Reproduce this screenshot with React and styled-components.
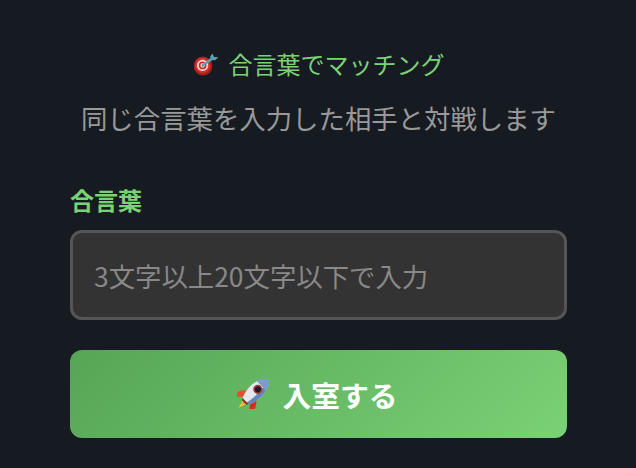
import React from "react";
import styled, { createGlobalStyle } from "styled-components";

const GlobalStyle = createGlobalStyle`
  html, body {
    margin: 0;
    background-color: #161b22;
  }
  body {
    font-family: "Noto Sans CJK JP", "Noto Sans", sans-serif;
  }
`;

const Page = styled.div`
  width: 636px;
  height: 468px;
  box-sizing: border-box;
  padding: 44px 69px 0 70px;
  overflow: hidden;
`;

const Intro = styled.div`
  text-align: center;
  margin-bottom: 48px;
`;

const Heading = styled.div`
  display: flex;
  align-items: center;
  justify-content: center;
  gap: 10px;
  color: #7bd175;
  font-size: 24px;
  line-height: 40px;
  margin-bottom: 16px;
`;

const Description = styled.div`
  color: #999999;
  font-size: 26.4px;
  line-height: 36px;
  white-space: nowrap;
`;

const Label = styled.label`
  display: block;
  color: #7bd175;
  font-size: 24px;
  font-weight: 700;
  line-height: 32px;
  margin-bottom: 14px;
`;

const Input = styled.input`
  display: block;
  width: 100%;
  height: 90px;
  box-sizing: border-box;
  padding: 0 21px;
  margin-bottom: 30px;
  background-color: #333333;
  border: 3px solid #555555;
  border-radius: 12px;
  color: #ffffff;
  font-family: inherit;
  font-size: 26.4px;
  &::placeholder {
    color: #888888;
    opacity: 1;
  }
`;

const Button = styled.button`
  display: flex;
  align-items: center;
  justify-content: center;
  gap: 13px;
  width: 100%;
  height: 88px;
  padding: 0 2px 0 0;
  border: none;
  border-radius: 12px;
  background: linear-gradient(135deg, #56a556, #7bd175);
  color: #ffffff;
  font-family: inherit;
  font-size: 28.8px;
  font-weight: 700;
`;

const DartIcon = () => (
  <svg width="26" height="24" viewBox="0 0 26 24" aria-hidden="true">
    <circle cx="10" cy="14" r="9.4" fill="#a81c1c" />
    <circle cx="9.6" cy="13.4" r="7.6" fill="#d8322c" />
    <circle cx="9.6" cy="13.4" r="5.6" fill="#f4e4e0" />
    <circle cx="9.6" cy="13.4" r="3.9" fill="#cf2d2a" />
    <circle cx="9.6" cy="13.4" r="2.2" fill="#f4e4e0" />
    <circle cx="9.6" cy="13.4" r="1" fill="#b3201f" />
    <path d="M10 13.2L19 6.6" stroke="#55a7b5" strokeWidth="2.6" strokeLinecap="round" />
    <path d="M17 4.6L19.6 1.6L21 5L25.4 5.2L22.2 8.2L18.6 8Z" fill="#5d9fb0" />
  </svg>
);

const RocketIcon = () => (
  <svg width="32" height="30" viewBox="0 0 32 30" aria-hidden="true">
    <g transform="translate(16.5 14.5) rotate(46)">
      <path d="M-3.4 9L0 21L3.4 9Z" fill="#f6c736" />
      <path d="M-1.7 9L0 16L1.7 9Z" fill="#f4762a" />
      <path d="M-6 1L-12 9L-10.4 16L-4.4 9Z" fill="#ee4a2c" />
      <path d="M6 1L12 9L10.4 16L4.4 9Z" fill="#d5301f" />
      <path d="M0 -21C5.6 -16 8 -9 7.6 -2C7.4 3 5.8 8 4.4 11H-4.4C-5.8 8 -7.4 3 -7.6 -2C-8 -9 -5.6 -16 0 -21Z" fill="#e4e8ee" />
      <path d="M0 -21C5.6 -16 8 -9 7.6 -2C7.4 3 5.8 8 4.4 11H1.6C3.6 4 3.6 -12 0 -21Z" fill="#5f86bd" />
      <path d="M0 -21C-3.8 -18 -6 -14.6 -7 -11H7C6 -14.6 3.8 -18 0 -21Z" fill="#7e9ccb" />
      <circle cx="0" cy="-6" r="4.6" fill="#a33a36" />
      <circle cx="0" cy="-6" r="3" fill="#161a24" />
      <path d="M-4.4 11H4.4L3.2 13H-3.2Z" fill="#7c3524" />
    </g>
  </svg>
);

export default function App() {
  return (
    <Page>
      <GlobalStyle />
      <Intro>
        <Heading>
          <DartIcon />
          合言葉でマッチング
        </Heading>
        <Description>同じ合言葉を入力した相手と対戦します</Description>
      </Intro>
      <Label htmlFor="keyword">合言葉</Label>
      <Input id="keyword" placeholder="3文字以上20文字以下で入力" />
      <Button>
        <RocketIcon />
        入室する
      </Button>
    </Page>
  );
}
